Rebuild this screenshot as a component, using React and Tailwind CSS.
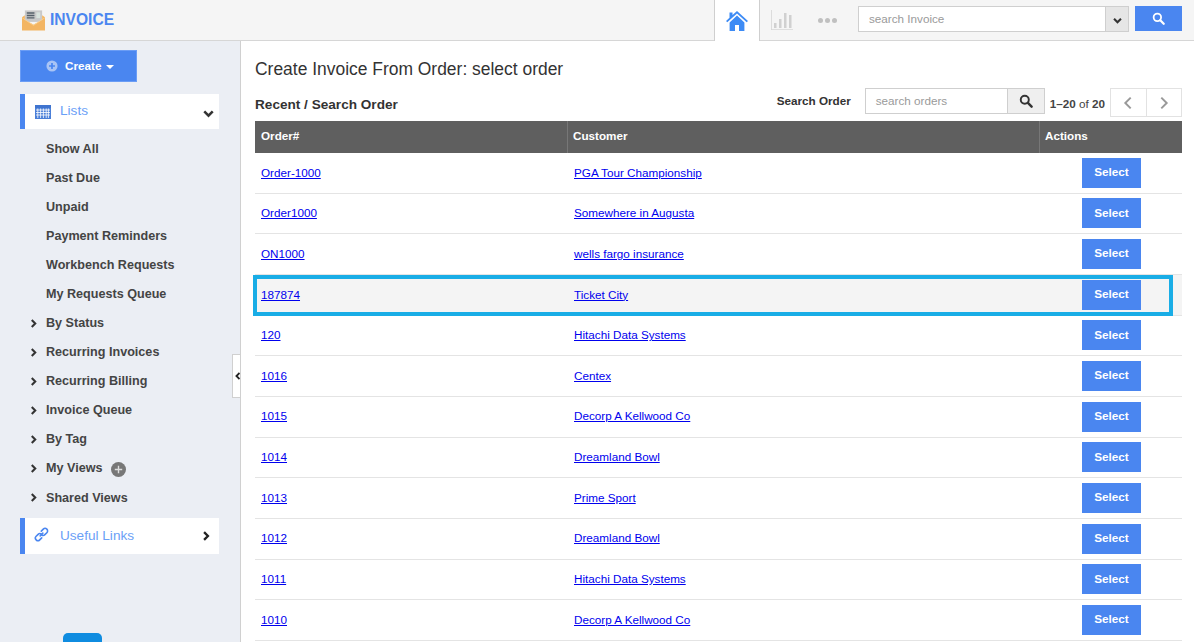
import React from "react";

const rows = [
  ["Order-1000", "PGA Tour Championship"],
  ["Order1000", "Somewhere in Augusta"],
  ["ON1000", "wells fargo insurance"],
  ["187874", "Ticket City"],
  ["120", "Hitachi Data Systems"],
  ["1016", "Centex"],
  ["1015", "Decorp A Kellwood Co"],
  ["1014", "Dreamland Bowl"],
  ["1013", "Prime Sport"],
  ["1012", "Dreamland Bowl"],
  ["1011", "Hitachi Data Systems"],
  ["1010", "Decorp A Kellwood Co"],
];

const plainLinks = ["Show All", "Past Due", "Unpaid", "Payment Reminders", "Workbench Requests", "My Requests Queue"];
const treeLinks = ["By Status", "Recurring Invoices", "Recurring Billing", "Invoice Queue", "By Tag", "My Views", "Shared Views"];

const Chev = ({ dir = "right", className = "", sw = 3 }) => {
  const d = { right: "M4 1.5 9 6.5 4 11.5", left: "M9 1.5 4 6.5 9 11.5", down: "M1.5 4 6.5 9 11.5 4" }[dir];
  return (
    <svg viewBox="0 0 13 13" className={className} fill="none" stroke="currentColor" strokeWidth={sw}>
      <path d={d} />
    </svg>
  );
};

const SearchIcon = ({ className = "" }) => (
  <svg viewBox="0 0 16 16" className={className} fill="none" stroke="currentColor" strokeWidth="2.2" strokeLinecap="round">
    <circle cx="6.6" cy="6.6" r="4.6" />
    <path d="M10.2 10.2 14.4 14.4" strokeWidth="2.8" />
  </svg>
);

function Logo() {
  return (
    <svg viewBox="0 0 24 22" className="w-[23px] h-[22px]">
      <path d="M3 1h18v12H3z" fill="#c9c9c9" />
      <path d="M5 3h8v1.5H5zM5 5.5h8V7H5zM5 8h8v1.5H5z" fill="#55606a" />
      <path d="M15 3h4v6h-4z" fill="#d8e3dd" />
      <path d="M0 8 3 6v5l9 5 9-5V6l3 2v14H0z" fill="#f3b562" />
      <path d="M0 8 12 16 24 8v1L12 17 0 9z" fill="#fbd08e" />
    </svg>
  );
}

function Sidebar() {
  return (
    <aside className="relative w-[241px] shrink-0 bg-[#ebeef4] border-r border-[#d0d0d0] pl-5 pt-[9px] h-[601px] overflow-hidden">
      <button className="w-[117px] h-[32px] bg-[#4a86f0] border border-[#6b9df5] text-white text-[11.7px] font-bold flex items-center justify-start pl-[25px]">
        <svg viewBox="0 0 14 14" className="w-[12px] h-[12px] mr-[7px]">
          <circle cx="7" cy="7" r="6.5" fill="#a9c4f5" />
          <path d="M3.5 7h7M7 3.5v7" stroke="#4a86f0" strokeWidth="2" />
        </svg>
        <span>Create</span>
        <span className="ml-[5px] w-0 h-0 border-x-[4px] border-x-transparent border-t-[4px] border-t-white mt-[2px]" />
      </button>

      <div className="mt-[12px] w-[199px] h-[35px] bg-white border-l-[5px] border-[#4a86f0] flex items-center pl-[10px] pr-[5px]">
        <svg viewBox="0 0 16 14" className="w-[16px] h-[14px]">
          <rect width="16" height="14" fill="#4a7fd8" />
          <rect y="0" width="16" height="3" fill="#3f74cf" />
          <path d="M1 5h14M1 7.5h14M1 10h14M2.8 3.5v9.5M5.6 3.5v9.5M8.4 3.5v9.5M11.2 3.5v9.5M13.4 3.5v9.5" stroke="#fff" strokeWidth="0.8" />
        </svg>
        <span className="ml-[9px] text-[13.6px] text-[#6aa0f7]">Lists</span>
        <Chev dir="down" className="ml-auto w-[11px] h-[11px] text-[#333] mt-[3px]" sw={3} />
      </div>

      <ul className="mt-[5.5px] text-[12.6px] font-bold text-[#444]">
        {plainLinks.map((t) => (
          <li key={t} className="h-[29.08px] flex items-center pl-[26px]">{t}</li>
        ))}
        {treeLinks.map((t) => (
          <li key={t} className="h-[29.08px] flex items-center pl-[9px]">
            <Chev className="w-[9px] h-[9px] text-[#333] mr-[8px]" sw={3} />
            <span>{t}</span>
            {t === "My Views" && (
              <svg viewBox="0 0 15 15" className="w-[15px] h-[15px] ml-[9px] mt-[2px]">
                <circle cx="7.5" cy="7.5" r="7.5" fill="#777" />
                <path d="M3.8 7.5h7.4M7.5 3.8v7.4" stroke="#ddd" strokeWidth="1.4" />
              </svg>
            )}
          </li>
        ))}
      </ul>

      <div className="mt-[5.5px] w-[199px] h-[36px] bg-white border-l-[5px] border-[#4a86f0] flex items-center pl-[9px] pr-[8px]">
        <svg viewBox="0 0 16 16" className="w-[15px] h-[15px] mb-[3px]" fill="none" stroke="#4a86f0" strokeWidth="1.7" strokeLinecap="round">
          <path d="M6.6 9.4 9.4 6.6" />
          <path d="M7.8 4.4 9.9 2.3a2.6 2.6 0 0 1 3.8 3.8l-2.1 2.1a2.6 2.6 0 0 1-3.5.1" />
          <path d="M8.2 11.6 6.1 13.7a2.6 2.6 0 0 1-3.8-3.8l2.1-2.1a2.6 2.6 0 0 1 3.5-.1" />
        </svg>
        <span className="ml-[11px] text-[13.6px] text-[#6aa0f7]">Useful Links</span>
        <Chev className="ml-auto w-[10px] h-[10px] text-[#222]" sw={3} />
      </div>

      <div className="absolute left-[63px] top-[592px] w-[39px] h-[20px] bg-[#0f8ce0] rounded-t-[5px]" />
      <button className="absolute right-[-1px] top-[313px] w-[9px] h-[44px] bg-white border border-r-0 border-[#d0d0d0] flex items-center justify-center pl-[2px]">
        <Chev dir="left" className="w-[8px] h-[8px] text-[#222] shrink-0" sw={3} />
      </button>
    </aside>
  );
}

function Main() {
  return (
    <main className="relative flex-1 pl-[14px] pr-[12px] h-[601px] overflow-hidden bg-white">
      <h1 className="mt-[18px] h-[21px] leading-[21px] text-[17.45px] text-[#333]">Create Invoice From Order: select order</h1>
      <div className="mt-[8px] h-[33px] flex items-start">
        <h2 className="mt-[8px] text-[13.6px] leading-[17px] font-bold text-[#333]">Recent / Search Order</h2>
        <span className="ml-auto mt-[4px] text-[11.7px] leading-[17px] font-bold text-[#333]">Search Order</span>
        <div className="ml-[14px] w-[180px] h-[26px] border border-[#cfcfcf] flex text-[11.7px]">
          <div className="flex-1 pl-[10px] flex items-center text-[#9a9a9a]">search orders</div>
          <div className="w-[37px] bg-[#efefef] border-l border-[#cfcfcf] flex items-center justify-center">
            <SearchIcon className="w-[14px] h-[14px] text-[#333]" />
          </div>
        </div>
        <span className="ml-[5px] mt-[7px] text-[11.7px] leading-[17px] text-[#444] whitespace-nowrap">
          <b>1–20</b> of <b>20</b>
        </span>
        <div className="ml-[5px] w-[72px] h-[29px] border border-[#e2e2e2] flex">
          <div className="flex-1 flex items-center justify-center border-r border-[#e2e2e2]">
            <Chev dir="left" className="w-[14px] h-[14px] text-[#999]" sw={1.8} />
          </div>
          <div className="flex-1 flex items-center justify-center">
            <Chev className="w-[14px] h-[14px] text-[#999]" sw={1.8} />
          </div>
        </div>
      </div>

      <div className="w-[927px] h-[32px] bg-[#5f5f5f] flex text-[11.7px] font-bold text-white">
        <div className="w-[313px] pl-[6px] pb-[3px] flex items-center border-r border-[#777]">Order#</div>
        <div className="w-[472px] pl-[5px] pb-[3px] flex items-center border-r border-[#777]">Customer</div>
        <div className="flex-1 pl-[5px] pb-[3px] flex items-center">Actions</div>
      </div>

      <div className="w-[927px] text-[11.7px]">
        {rows.map(([o, c], i) => (
          <div key={o + i} className={`h-[40.67px] flex items-center border-b border-[#e4e4e4] ${i === 3 ? "bg-[#f4f4f4]" : "bg-white"}`}>
            <div className="w-[314px] pl-[6px] pb-[1px]"><a href="#" className="text-[#0000ee] underline">{o}</a></div>
            <div className="w-[513px] pl-[5px] pb-[1px]"><a href="#" className="text-[#0000ee] underline">{c}</a></div>
            <button className="w-[59px] h-[30px] pb-[2px] bg-[#4a86f0] text-white font-bold">Select</button>
          </div>
        ))}
      </div>

      <div className="absolute left-[12px] top-[234px] w-[920px] h-[41px] border-[4px] border-[#19ade6] pointer-events-none" />
    </main>
  );
}

export default function App() {
  return (
    <div className="w-[1194px] h-[642px] overflow-hidden bg-white font-['Liberation_Sans',Arial,sans-serif]">
      <header className="h-[41px] bg-[#f5f5f5] border-b border-[#d6d6d6] flex items-center relative">
        <div className="ml-[22px] flex items-center">
          <Logo />
          <span className="ml-[5px] text-[15.6px] font-bold text-[#4a86f0]">INVOICE</span>
        </div>
        <div className="ml-auto self-stretch flex items-stretch">
          <div className="w-[46px] h-[41px] bg-white border-x border-[#cfcfcf] flex items-center justify-center">
            <svg viewBox="0 0 22 20" className="w-[22px] h-[20px]" fill="#3d8bf5">
              <path d="M11 0 22 10l-1.3 1.3L11 2.6 1.3 11.3 0 10 3.5 6.8V1.5h3v2.6z" />
              <path d="M3.6 11.4 11 4.6l7.4 6.8V20H13v-6H9v6H3.6z" />
            </svg>
          </div>
          <div className="w-[43px] flex items-center justify-center">
            <svg viewBox="0 0 22 20" className="w-[22px] h-[20px]" fill="#d0d0d0">
              <path d="M0 0h.8v19.2H22v.8H0z" fill="#d6d6d6" />
              <path d="M3 13h2.5v5H3zM8 9h2.5v9H8zM13 3h2.5v15H13zM18 5h2.5v13H18z" />
            </svg>
          </div>
          <div className="w-[49px] flex items-center justify-center gap-[2px]">
            <span className="w-[5px] h-[5px] rounded-full bg-[#c0c0c0]" />
            <span className="w-[5px] h-[5px] rounded-full bg-[#c0c0c0]" />
            <span className="w-[5px] h-[5px] rounded-full bg-[#c0c0c0]" />
          </div>
          <div className="ml-[6px] mt-[6px] w-[271px] h-[26px] bg-white border border-[#cfcfcf] flex text-[11.7px]">
            <div className="flex-1 pl-[10px] flex items-center text-[#9a9a9a]">search Invoice</div>
            <div className="w-[23px] bg-[#e6e6e6] border-l border-[#cfcfcf] flex items-center justify-center">
              <Chev dir="down" className="w-[9px] h-[9px] text-[#333] mt-[3px]" sw={3} />
            </div>
          </div>
          <button className="ml-[6px] mt-[6px] mr-[12px] w-[47px] h-[25px] bg-[#4a86f0] flex items-center justify-center">
            <SearchIcon className="w-[13px] h-[13px] text-white" />
          </button>
        </div>
      </header>
      <div className="flex">
        <Sidebar />
        <Main />
      </div>
    </div>
  );
}
